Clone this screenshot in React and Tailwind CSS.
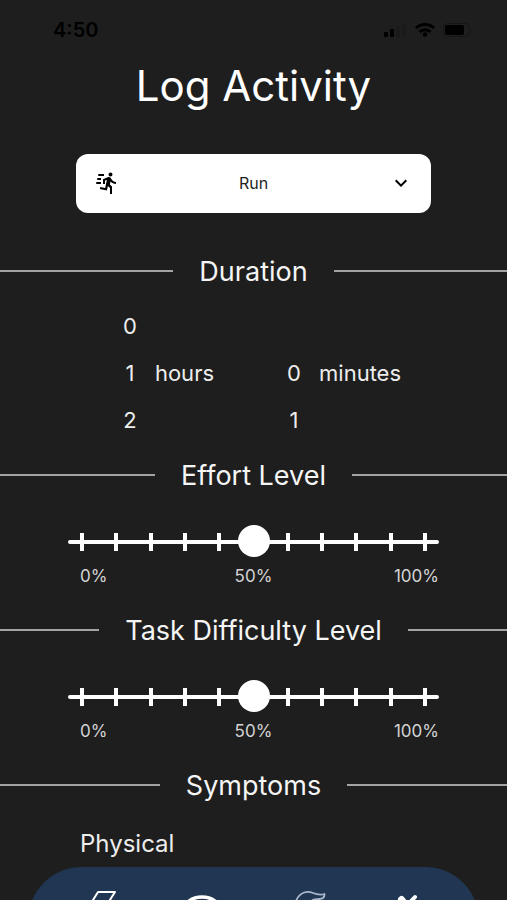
import React, { useState } from 'react';

const TICKS = 11;

const StatusBar = () => (
    <div className="flex h-15 shrink-0 items-center justify-between pl-[53px] pr-8 text-black">
        <span className="text-xl font-semibold">4:50</span>
        <svg className="h-5 w-[92px]" viewBox="0 0 92 20" fill="currentColor" aria-hidden="true">
            <rect x="1" y="12" width="4" height="5" rx="1" />
            <rect x="7" y="9" width="4" height="8" rx="1" />
            <rect x="13" y="6" width="4" height="11" rx="1" opacity="0.12" />
            <rect x="19" y="3" width="4" height="14" rx="1" opacity="0.12" />
            <g fill="none" stroke="currentColor" strokeWidth="3">
                <path d="M33 8a13 13 0 0 1 18 0" />
                <path d="M36.5 12a8 8 0 0 1 11 0" />
            </g>
            <circle cx="42" cy="14.5" r="2.2" />
            <rect x="60.5" y="3.5" width="26" height="13" rx="4" fill="none" stroke="currentColor" opacity="0.25" />
            <rect x="62" y="5" width="19" height="10" rx="2" />
            <path d="M88.5 8v4a2.5 2.5 0 0 0 0-4z" opacity="0.4" />
        </svg>
    </div>
);

const ActivitySelect = () => {
    const [activity, setActivity] = useState('Run');

    return (
        <div className="relative mx-19 mt-[42px] shrink-0">
            <select
                aria-label="Activity"
                value={activity}
                onChange={(e) => setActivity(e.target.value)}
                className="h-[59px] w-full appearance-none rounded-xl bg-white px-12 pb-[2px] text-center text-base text-[#1e1e1e] [text-align-last:center]"
            >
                <option>Run</option>
                <option>Walk</option>
                <option>Swim</option>
            </select>
            <svg className="pointer-events-none absolute left-[18px] top-[17px] size-6 text-black" viewBox="0 0 24 24" fill="currentColor" aria-hidden="true">
                <path d="M16.5,5.5A2,2 0 0,0 18.5,3.5A2,2 0 0,0 16.5,1.5A2,2 0 0,0 14.5,3.5A2,2 0 0,0 16.5,5.5M12.9,19.4L13.9,15L16,17V23H18V15.5L15.9,13.5L16.5,10.5C17.89,12.09 19.89,13 22,13V11C20.24,11.03 18.6,10.11 17.7,8.6L16.7,7C16.34,6.4 15.7,6 15,6C14.7,6 14.5,6.1 14.2,6.1L9,8.3V13H11V9.6L12.8,8.9L11.2,17L6.3,16L5.9,18L12.9,19.4M4,9A1,1 0 0,1 3,8A1,1 0 0,1 4,7H7V9H4M5,5A1,1 0 0,1 4,4A1,1 0 0,1 5,3H10V5H5M3,13A1,1 0 0,1 2,12A1,1 0 0,1 3,11H7V13H3Z" />
            </svg>
            <svg className="pointer-events-none absolute right-[18px] top-[17px] size-6 text-black" viewBox="0 0 24 24" fill="currentColor" aria-hidden="true">
                <path d="M7.41,8.58L12,13.17L16.59,8.58L18,10L12,16L6,10L7.41,8.58Z" />
            </svg>
        </div>
    );
};

const SectionHeading = ({ id, children }) => (
    <div className="flex h-10 shrink-0 items-center gap-[26px]">
        <span className="h-[2px] flex-1 bg-[#a3a3a3]" />
        <h2 id={id} className="pt-[2px] text-[27px] leading-10 text-[#f5f5f5]">{children}</h2>
        <span className="h-[2px] flex-1 bg-[#a3a3a3]" />
    </div>
);

// Wheel picker: selected value sits in the middle row next to the unit
const WheelPicker = ({ unit, max, initial }) => {
    const [value, setValue] = useState(initial);
    const rows = [value - 1, value, value + 1];

    return (
        <div className="flex items-center gap-[5px]" role="group" aria-label={unit}>
            <div className="flex w-10 flex-col">
                {rows.map((n) => (
                    <button key={n} type="button" onClick={() => setValue(n)} disabled={n < 0 || n > max} className="h-[47px] text-center">
                        {n < 0 || n > max ? '' : n}
                    </button>
                ))}
            </div>
            <span>{unit}</span>
        </div>
    );
};

const LevelSlider = ({ labelledBy }) => {
    const [level, setLevel] = useState(50);

    return (
        <div className="mx-17 mb-[22px] mt-[29px] shrink-0">
            <div className="relative h-8">
                <div className="flex h-full items-center justify-between px-3 pt-1">
                    {Array.from({ length: TICKS }, (_, i) => (
                        <span key={i} className="h-[18px] w-1 bg-white" />
                    ))}
                </div>
                <input
                    type="range"
                    min="0"
                    max="100"
                    step="10"
                    value={level}
                    aria-labelledby={labelledBy}
                    onChange={(e) => setLevel(Number(e.target.value))}
                    className="absolute inset-x-0 top-[2px] m-0 h-full w-full appearance-none bg-transparent [&::-webkit-slider-runnable-track]:h-1 [&::-webkit-slider-runnable-track]:rounded-full [&::-webkit-slider-runnable-track]:bg-white [&::-webkit-slider-thumb]:-mt-[15px] [&::-webkit-slider-thumb]:size-8 [&::-webkit-slider-thumb]:appearance-none [&::-webkit-slider-thumb]:rounded-full [&::-webkit-slider-thumb]:bg-white"
                />
            </div>
            <div className="mt-2 grid h-6 grid-cols-3 text-[17px] leading-6 text-[#d4d4d4]">
                <span className="pl-3">0%</span>
                <span className="text-center">50%</span>
                <span className="text-right">100%</span>
            </div>
        </div>
    );
};

const NavButton = ({ label, children }) => (
    <button type="button" aria-label={label} className="size-10">
        <svg className="size-10 overflow-visible" viewBox="0 0 40 40" fill="none" stroke="currentColor" strokeLinejoin="round" strokeLinecap="round">
            {children}
        </svg>
    </button>
);

const BottomNav = () => (
    <nav className="mx-7 flex h-24 items-start justify-between rounded-t-[54px] bg-[#203652] px-[55px] pt-5 text-white">
        <NavButton label="Activity">
            <path d="M15 5h17l-7 11h7L10 37l6-16H5z" strokeWidth="2" />
        </NavButton>
        <NavButton label="Overview">
            <ellipse cx="19" cy="23" rx="18" ry="13" strokeWidth="3.5" />
        </NavButton>
        <NavButton label="Nutrition">
            <path d="M12 14C16 4 24 4 29 6s8 2 11.500 1c0 3-2 5-5 5s-6 0-8 2M12 14c-4 9 2 19 12 20s15-10 14-19" stroke="#aab7cb" strokeWidth="1.800" />
        </NavButton>
        <NavButton label="Exercise">
            <path d="M17.500 12.500l11 15" strokeWidth="7" />
            <path d="M31 10L17 25" strokeWidth="4" />
        </NavButton>
    </nav>
);

export default function App() {
    return (
        <main className="flex h-screen flex-col overflow-hidden bg-[#1e1e1e] font-['Inter',sans-serif] text-[#ededed]">
            <StatusBar />
            <h1 className="shrink-0 text-center text-[42px] leading-[52px] text-white">Log Activity</h1>
            <ActivitySelect />

            <section className="mt-[38px] shrink-0">
                <SectionHeading id="duration">Duration</SectionHeading>
                <div className="mb-[11px] mt-3 flex justify-center gap-15 pl-1 text-[22px]">
                    <WheelPicker unit="hours" max={23} initial={1} />
                    <WheelPicker unit="minutes" max={59} initial={0} />
                </div>
            </section>

            <section className="shrink-0">
                <SectionHeading id="effort">Effort Level</SectionHeading>
                <LevelSlider labelledBy="effort" />
            </section>

            <section className="shrink-0">
                <SectionHeading id="difficulty">Task Difficulty Level</SectionHeading>
                <LevelSlider labelledBy="difficulty" />
            </section>

            <section className="shrink-0">
                <SectionHeading id="symptoms">Symptoms</SectionHeading>
                <h3 className="ml-20 mt-[23px] text-2xl leading-8">Physical</h3>
            </section>

            <div className="mt-[7px] shrink-0">
                <BottomNav />
            </div>
        </main>
    );
}
